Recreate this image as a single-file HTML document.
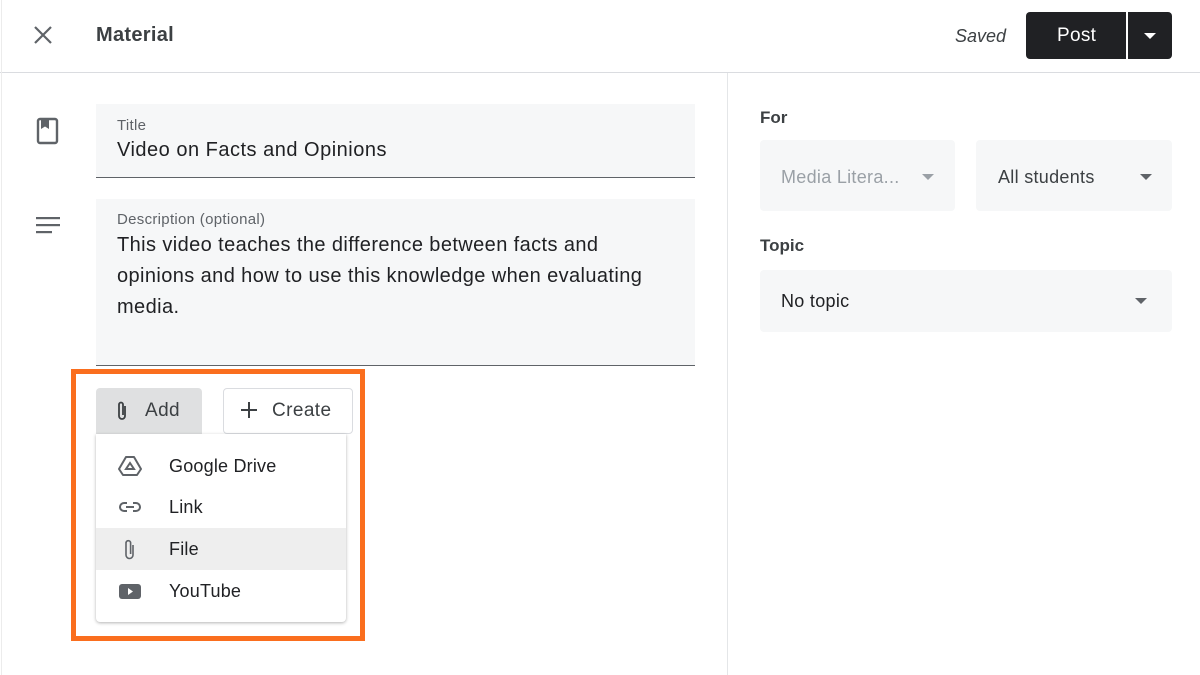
<!DOCTYPE html>
<html><head><style>
*{margin:0;padding:0;box-sizing:border-box}
body{width:1200px;height:675px;background:#fff;font-family:"Liberation Sans",Arial,sans-serif;color:#202124;position:relative;overflow:hidden}
.a{position:absolute}
.field{background:#f6f7f8;border-bottom:1px solid #5f6368}
.sel{background:#f6f7f8;border-radius:4px}
.tri{width:0;height:0;border-left:6px solid transparent;border-right:6px solid transparent;border-top:6px solid #5f6368}
.mi{position:absolute;left:0;width:250px;height:42px;font-size:18px;line-height:42px;padding-left:73px;color:#202124;letter-spacing:0.2px}
.mi svg{position:absolute;left:22px;top:10px}
</style></head><body>
<div class="a" style="left:0;top:72px;width:1200px;height:1px;background:#dadce0"></div>
<div class="a" style="left:727px;top:73px;width:1px;height:602px;background:#e4e6e8"></div>
<div class="a" style="left:1px;top:0;width:1px;height:675px;background:#ececec"></div>
<svg class="a" style="left:32px;top:24px" width="22" height="22" viewBox="0 0 22 22"><path d="M3 3L19 19M19 3L3 19" stroke="#5f6368" stroke-width="2.2"/></svg>
<div class="a" style="left:96px;top:24px;font-size:20px;color:#3c4043;font-weight:bold;letter-spacing:0.3px">Material</div>
<div class="a" style="left:955px;top:26px;font-size:18px;font-style:italic;color:#3c4043">Saved</div>
<div class="a" style="left:1026px;top:12px;width:146px;height:47px;background:#202124;border-radius:4px"></div>
<div class="a" style="left:1126px;top:12px;width:2px;height:47px;background:#fff"></div>
<div class="a" style="left:1057px;top:25px;font-size:19px;color:#fff;letter-spacing:0.3px">Post</div>
<div class="a tri" style="left:1144px;top:33px;border-top-color:#fff"></div>

<svg class="a" style="left:36px;top:117px" width="24" height="28" viewBox="0 0 24 28"><rect x="2" y="2" width="19" height="24" rx="2" fill="none" stroke="#5f6368" stroke-width="2.4"/><path d="M5 3h8v9l-4-2.5-4 2.5z" fill="#5f6368"/></svg>
<svg class="a" style="left:36px;top:216px" width="26" height="20"><rect x="0" y="1" width="24" height="2.2" fill="#5f6368"/><rect x="0" y="8" width="24" height="2.2" fill="#5f6368"/><rect x="0" y="15" width="16" height="2.2" fill="#5f6368"/></svg>

<div class="a field" style="left:96px;top:104px;width:599px;height:74px"></div>
<div class="a" style="left:117px;top:117px;font-size:15px;color:#5f6368;letter-spacing:0.3px">Title</div>
<div class="a" style="left:117px;top:139px;font-size:20px;letter-spacing:0.5px">Video on Facts and Opinions</div>
<div class="a field" style="left:96px;top:199px;width:599px;height:167px"></div>
<div class="a" style="left:117px;top:211px;font-size:15px;color:#5f6368;letter-spacing:0.3px">Description (optional)</div>
<div class="a" style="left:117px;top:230px;font-size:20px;line-height:31px;width:550px;letter-spacing:0.4px">This video teaches the difference between facts and opinions and how to use this knowledge when evaluating media.</div>

<div class="a" style="left:71px;top:369px;width:294px;height:272px;border:5px solid #fa6e1e"></div>
<div class="a" style="left:96px;top:388px;width:106px;height:46px;background:#dfe0e1;border-radius:4px 4px 0 0"></div>
<svg class="a" style="left:115px;top:400px" width="14" height="22" viewBox="0 0 14 22"><path d="M10 6v10a3 3 0 0 1-6 0V4.5a2 2 0 0 1 4 0V15" fill="none" stroke="#3c4043" stroke-width="1.8"/></svg>
<div class="a" style="left:145px;top:400px;font-size:19px;color:#3c4043;letter-spacing:0.4px">Add</div>
<div class="a" style="left:223px;top:388px;width:130px;height:46px;border:1px solid #dadce0;border-radius:4px"></div>
<svg class="a" style="left:240px;top:401px" width="18" height="18"><path d="M9 1v16M1 9h16" stroke="#3c4043" stroke-width="2"/></svg>
<div class="a" style="left:272px;top:400px;font-size:19px;color:#3c4043;letter-spacing:0.4px">Create</div>
<div class="a" style="left:96px;top:434px;width:250px;height:188px;background:#fff;border-radius:0 0 4px 4px;box-shadow:0 1px 3px rgba(0,0,0,.3)">
<div class="mi" style="top:11px"><svg width="24" height="22" viewBox="0 0 24 22"><path d="M8 2h8l7 12-4 6H5l-4-6z" fill="none" stroke="#5f6368" stroke-width="2" stroke-linejoin="round"/><path d="M12 8l4 6H8z" fill="none" stroke="#5f6368" stroke-width="2"/></svg>Google Drive</div>
<div class="mi" style="top:52px"><svg width="24" height="22" viewBox="0 0 24 22"><path d="M9 7H6a4 4 0 0 0 0 8h3M15 7h3a4 4 0 0 1 0 8h-3M8 11h8" fill="none" stroke="#5f6368" stroke-width="2"/></svg>Link</div>
<div class="mi" style="top:94px;background:#eeeeee"><svg width="24" height="24" viewBox="0 0 24 24"><path d="M15 7v10a3.5 3.5 0 0 1-7 0V5a2.3 2.3 0 0 1 4.6 0V16" fill="none" stroke="#5f6368" stroke-width="1.6"/></svg>File</div>
<div class="mi" style="top:136px"><svg width="24" height="22" viewBox="0 0 24 22"><rect x="1" y="4" width="22" height="15" rx="3" fill="#5f6368"/><path d="M10 8v7l5-3.5z" fill="#fff"/></svg>YouTube</div>
</div>

<div class="a" style="left:760px;top:108px;font-size:17px;font-weight:bold;color:#3c4043">For</div>
<div class="a sel" style="left:760px;top:140px;width:195px;height:71px"></div>
<div class="a" style="left:781px;top:167px;font-size:18px;color:#9aa0a6;letter-spacing:0.3px">Media Litera...</div>
<div class="a tri" style="left:922px;top:174px;border-top-color:#9aa0a6"></div>
<div class="a sel" style="left:976px;top:140px;width:196px;height:71px"></div>
<div class="a" style="left:998px;top:167px;font-size:18px;color:#3c4043;letter-spacing:0.3px">All students</div>
<div class="a tri" style="left:1140px;top:174px"></div>
<div class="a" style="left:760px;top:236px;font-size:17px;font-weight:bold;color:#3c4043">Topic</div>
<div class="a sel" style="left:760px;top:270px;width:412px;height:62px"></div>
<div class="a" style="left:781px;top:291px;font-size:18px;letter-spacing:0.3px">No topic</div>
<div class="a tri" style="left:1135px;top:298px"></div>
</body></html>
